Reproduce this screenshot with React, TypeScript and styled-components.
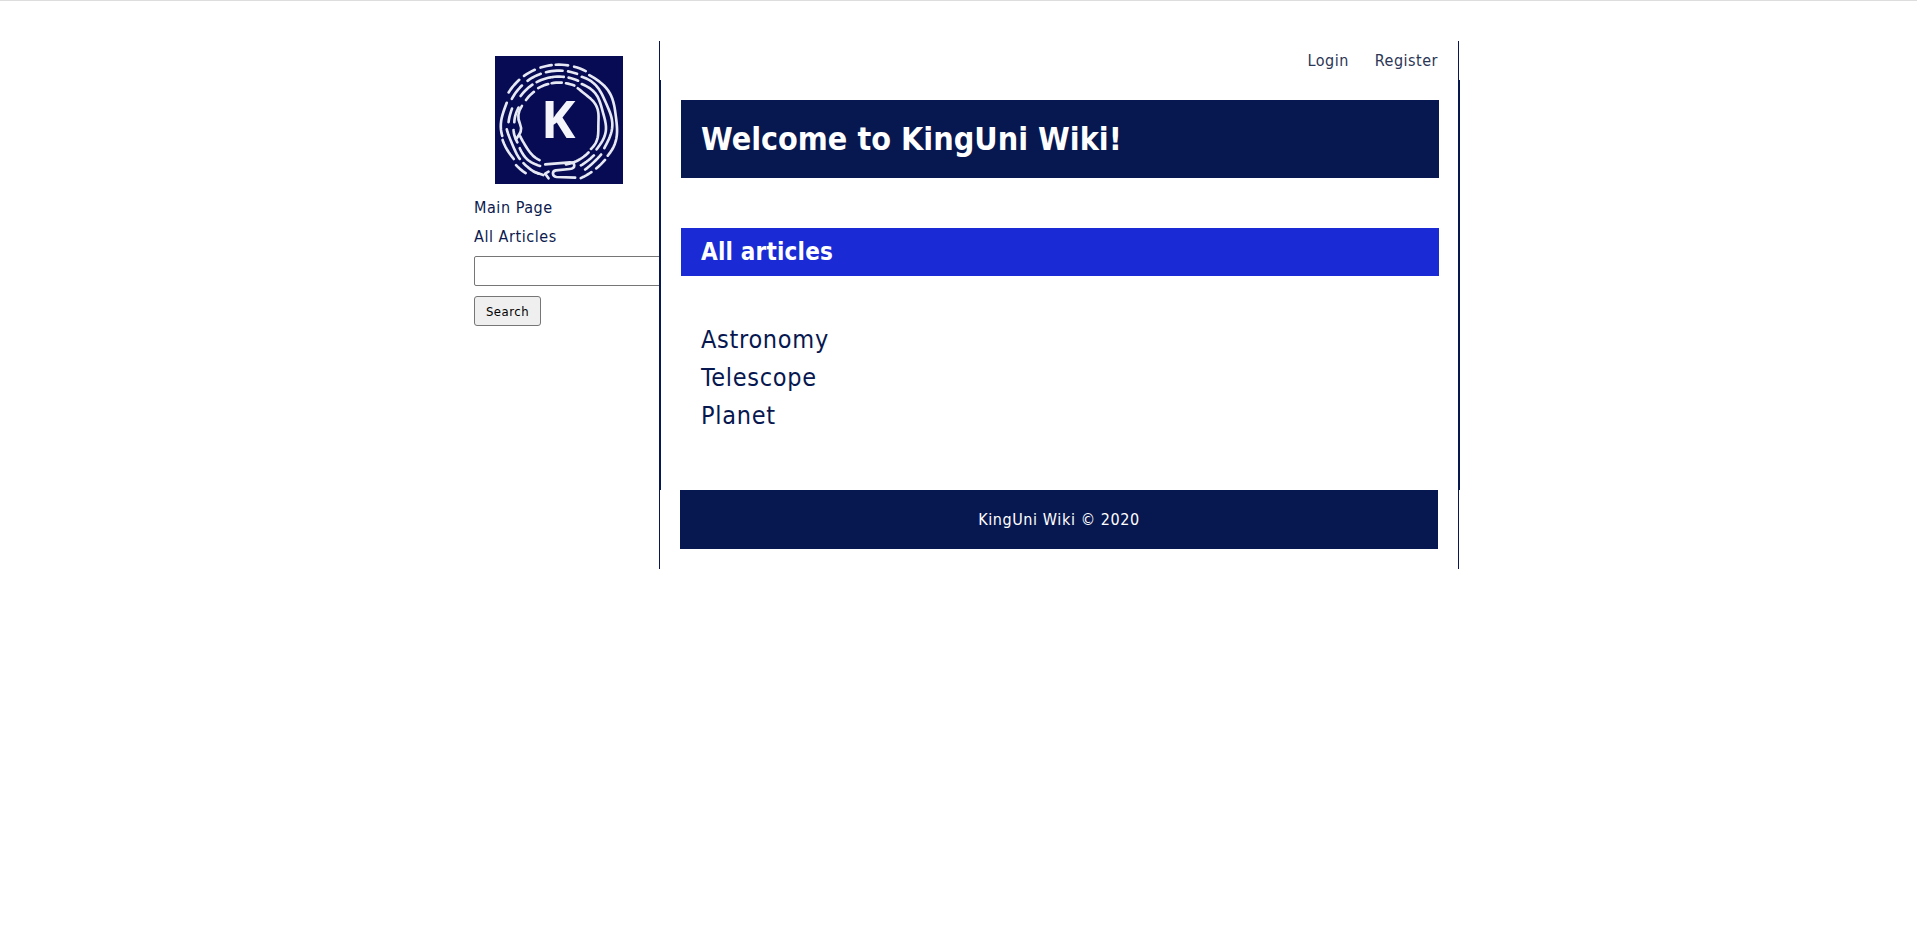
import React from "react";
import styled, { createGlobalStyle } from "styled-components";

const NAVY = "#071750";
const INK = "#0c1a4e";
const FONT = `"DejaVu Sans Condensed", "DejaVu Sans", sans-serif`;

const Global = createGlobalStyle`
  html, body { margin: 0; padding: 0; background: #fff; }
  body { font-family: ${FONT}; color: ${INK}; }
  #root { min-height: 930px; }
`;

const Page = styled.div`
  border-top: 1px solid #ddd;
  padding-top: 40px;
  min-height: 889px;
`;

const Wrapper = styled.div`
  display: flex;
  width: 969px;
  margin: 0 auto;
`;

const Sidebar = styled.aside`
  flex: 0 0 185px;
  min-width: 0;
  display: flex;
  flex-direction: column;
  align-items: flex-start;
`;

const LogoBox = styled.svg`
  display: block;
  width: 128px;
  height: 128px;
  margin: 15px 0 0 21px;
`;

const SideLink = styled.a`
  display: block;
  font-size: 16px;
  letter-spacing: 0.55px;
  line-height: 29px;
  color: ${INK};
  text-decoration: none;
`;

const SideLinks = styled.nav`
  margin-top: 9px;
`;

const SearchInput = styled.input`
  display: block;
  flex: none;
  box-sizing: border-box;
  width: 210px;
  height: 30px;
  margin-top: 5px;
  padding: 1px 2px;
  border: 1px solid #767676;
  border-radius: 2px;
  background: #fff;
`;

const SearchButton = styled.button`
  box-sizing: border-box;
  width: 67px;
  height: 30px;
  margin-top: 10px;
  padding: 0;
  border: 1px solid #767676;
  border-radius: 3px;
  background: #efefef;
  color: #000;
  font: 13px ${FONT};
  letter-spacing: 0.5px;
`;

const Main = styled.main`
  flex: 0 0 800px;
  box-sizing: border-box;
  position: relative;
  height: 528px;
  background: #fff;
  border-left: 1px solid ${NAVY};
  border-right: 1px solid ${NAVY};
`;

const TopNav = styled.nav`
  display: flex;
  justify-content: flex-end;
  gap: 26px;
  height: 39px;
  padding: 10px 20px 0 0;
  box-sizing: border-box;
`;

const TopLink = styled.a`
  font-size: 16px;
  letter-spacing: 0.5px;
  line-height: 20px;
  color: #2b3556;
  text-decoration: none;
`;

const Body = styled.div`
  box-sizing: border-box;
  height: 410px;
  margin: 0 -2px 0 -1px;
  padding: 20px 19px 0 20px;
  border-left: 2px solid ${NAVY};
  border-right: 2px solid ${NAVY};
`;

const Banner = styled.h1`
  margin: 0;
  height: 78px;
  padding-left: 20px;
  background: ${NAVY};
  color: #fff;
  font-size: 32px;
  font-weight: 700;
  line-height: 78px;
`;

const SubBanner = styled.h2`
  margin: 50px 0 0;
  height: 48px;
  padding-left: 20px;
  background: #1a2ad4;
  color: #fff;
  font-size: 24px;
  font-weight: 700;
  letter-spacing: 0.2px;
  line-height: 49px;
`;

const ArticleList = styled.ul`
  list-style: none;
  margin: 45px 0 0;
  padding: 0 0 0 20px;
`;

const ArticleItem = styled.li`
  font-size: 25px;
  letter-spacing: 0.7px;
  line-height: 38px;
  color: ${NAVY};
`;

const Footer = styled.footer`
  height: 59px;
  margin: 0 20px;
  background: ${NAVY};
  color: #fff;
  font-size: 16px;
  letter-spacing: 0.6px;
  line-height: 60px;
  text-align: center;
`;

const CX = 207;
const CY = 222;

function ringPoint(r: number, deg: number, wob: number, phase: number) {
  const a = (deg * Math.PI) / 180;
  const rr = r + wob * Math.sin((deg * Math.PI) / 26 + phase);
  return `${(CX + rr * Math.sin(a)).toFixed(1)} ${(CY - rr * Math.cos(a)).toFixed(1)}`;
}

function arc(r: number, from: number, to: number, wob = 0, phase = 0) {
  const pts: string[] = [];
  for (let d = from; d <= to; d += 3) pts.push(ringPoint(r, d, wob, phase));
  pts.push(ringPoint(r, to, wob, phase));
  return "M" + pts.join("L");
}

const ARCS: [number, number, number, number, number][] = [
  // outer
  [178, -3, 9, 0, 0], [178, 15, 27, 0, 0], [176, 32, 123, 3, 1],
  [176, 128, 140, 1, 0], [176, 146, 158, 1, 0], [178, 214, 226, 1, 0], [174, 232, 254, 2, 2], [172, 258, 292, 3, 1],
  [178, 302, 318, 0, 0], [178, 324, 336, 0, 0], [178, 342, 353, 0, 0],
  // second
  [160, -8, 4, 0, 0], [160, 10, 20, 0, 0], [158, 26, 118, 3, 3],
  [158, 126, 150, 2, 1], [160, 202, 222, 2, 2], [156, 228, 264, 3, 0], [150, 272, 288, 2, 1],
  [160, 298, 316, 0, 0], [160, 324, 340, 0, 0], [160, 346, 352, 0, 0],
  // third
  [142, -8, 6, 0, 0], [142, 12, 24, 0, 0], [140, 30, 124, 3, 2],
  [142, 132, 152, 1, 0], [140, 204, 238, 3, 0], [136, 246, 262, 2, 2], [132, 272, 292, 2, 0],
  [142, 306, 326, 0, 0], [142, 332, 350, 0, 0],
  // inner
  [124, -10, 4, 0, 0], [124, 10, 22, 0, 0], [122, 28, 128, 3, 0],
  [124, 134, 170, 0, 0], [122, 208, 252, 2, 1],
  [122, 306, 322, 0, 0], [124, 330, 345, 0, 0],
];

const EXTRAS = [
  "M166 344 L240 338 C258 338 258 356 240 358 L198 362 C186 364 186 380 200 382 L256 384",
  "M132 366 L160 376",
  "M176 366 L166 372 L176 386",
  "M78 268 C92 250 98 240 90 222 C82 204 84 186 96 168",
];

function Logo() {
  const d = ARCS.map(([r, a, b, w, p]) => arc(r, a, b, w, p)).join(" ");
  return (
    <LogoBox viewBox="15 18 385 385" role="img" aria-label="KingUni logo">
      <rect x="15" y="18" width="385" height="385" fill="#070b54" />
      <path d={d} fill="none" stroke="#e6e9f3" strokeWidth="8" strokeLinecap="round" strokeLinejoin="round" />
      <path d={EXTRAS.join(" ")} fill="none" stroke="#e6e9f3" strokeWidth="8" strokeLinecap="round" strokeLinejoin="round" />
      <text x="205" y="266" textAnchor="middle" fontFamily="Open Sans, DejaVu Sans, sans-serif" fontWeight="700" fontSize="156" fill="#f4f5fa">K</text>
    </LogoBox>
  );
}

export default function App() {
  return (
    <>
      <Global />
      <Page>
        <Wrapper>
          <Sidebar>
            <Logo />
            <SideLinks>
              <SideLink href="#">Main Page</SideLink>
              <SideLink href="#">All Articles</SideLink>
            </SideLinks>
            <SearchInput type="text" />
            <SearchButton type="button">Search</SearchButton>
          </Sidebar>
          <Main>
            <TopNav>
              <TopLink href="#">Login</TopLink>
              <TopLink href="#">Register</TopLink>
            </TopNav>
            <Body>
              <Banner>Welcome to KingUni Wiki!</Banner>
              <SubBanner>All articles</SubBanner>
              <ArticleList>
                <ArticleItem>Astronomy</ArticleItem>
                <ArticleItem>Telescope</ArticleItem>
                <ArticleItem>Planet</ArticleItem>
              </ArticleList>
            </Body>
            <Footer>KingUni Wiki © 2020</Footer>
          </Main>
        </Wrapper>
      </Page>
    </>
  );
}
